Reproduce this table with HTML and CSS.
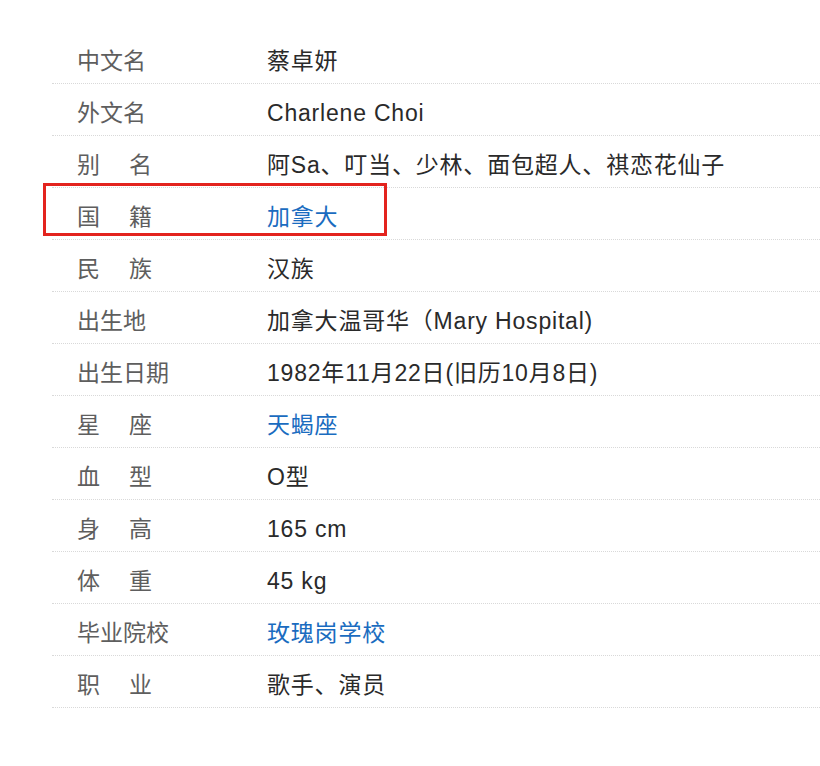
FILE: index.html
```html
<!DOCTYPE html>
<html lang="zh-CN">
<head>
  <meta charset="UTF-8" />
  <meta name="viewport" content="width=device-width, initial-scale=1.0" />
  <title>蔡卓妍</title>
  <link rel="stylesheet" href="styles.css">
</head>
<body>
  <div class="info">
    <div class="row"><span class="label">中文名</span><span class="value">蔡卓妍</span></div>
    <div class="row"><span class="label">外文名</span><span class="value">Charlene Choi</span></div>
    <div class="row"><span class="label pair">别名</span><span class="value">阿Sa、叮当、少林、面包超人、祺恋花仙子</span></div>
    <div class="row marked"><span class="label pair">国籍</span><span class="value link">加拿大</span><div class="mark"></div></div>
    <div class="row"><span class="label pair">民族</span><span class="value">汉族</span></div>
    <div class="row"><span class="label">出生地</span><span class="value">加拿大温哥华（Mary Hospital)</span></div>
    <div class="row"><span class="label">出生日期</span><span class="value">1982年11月22日(旧历10月8日)</span></div>
    <div class="row"><span class="label pair">星座</span><span class="value link">天蝎座</span></div>
    <div class="row"><span class="label pair">血型</span><span class="value">O型</span></div>
    <div class="row"><span class="label pair">身高</span><span class="value">165 cm</span></div>
    <div class="row"><span class="label pair">体重</span><span class="value">45 kg</span></div>
    <div class="row"><span class="label">毕业院校</span><span class="value link">玫瑰岗学校</span></div>
    <div class="row"><span class="label pair">职业</span><span class="value">歌手、演员</span></div>
  </div>
</body>
</html>
```

FILE: styles.css
```css
body {
  margin: 0;
  background-color: #ffffff;
  font-family: Arial, "Liberation Sans", "Noto Sans CJK SC", sans-serif;
}
.info {
  padding-top: 32px;
  margin-left: 52px;
}
.row {
  position: relative;
  height: 51px;
  line-height: 58px;
  border-bottom: 1px dotted #d9d9d9;
  font-size: 23px;
  white-space: nowrap;
}
.label {
  display: inline-block;
  width: 215px;
  padding-left: 25px;
  box-sizing: border-box;
  color: #5e5e5e;
}
.label.pair {
  width: 75px;
  padding-left: 0;
  margin-left: 25px;
  margin-right: 115px;
  text-align-last: justify;
}
.value {
  color: #2a2a2a;
  letter-spacing: 0.8px;
}
.link {
  color: #1a6cc0;
}
/* 红框标注 */
.mark {
  position: absolute;
  left: -9px;
  top: -5px;
  width: 338px;
  height: 47px;
  border: 3px solid #e3231e;
}
```
